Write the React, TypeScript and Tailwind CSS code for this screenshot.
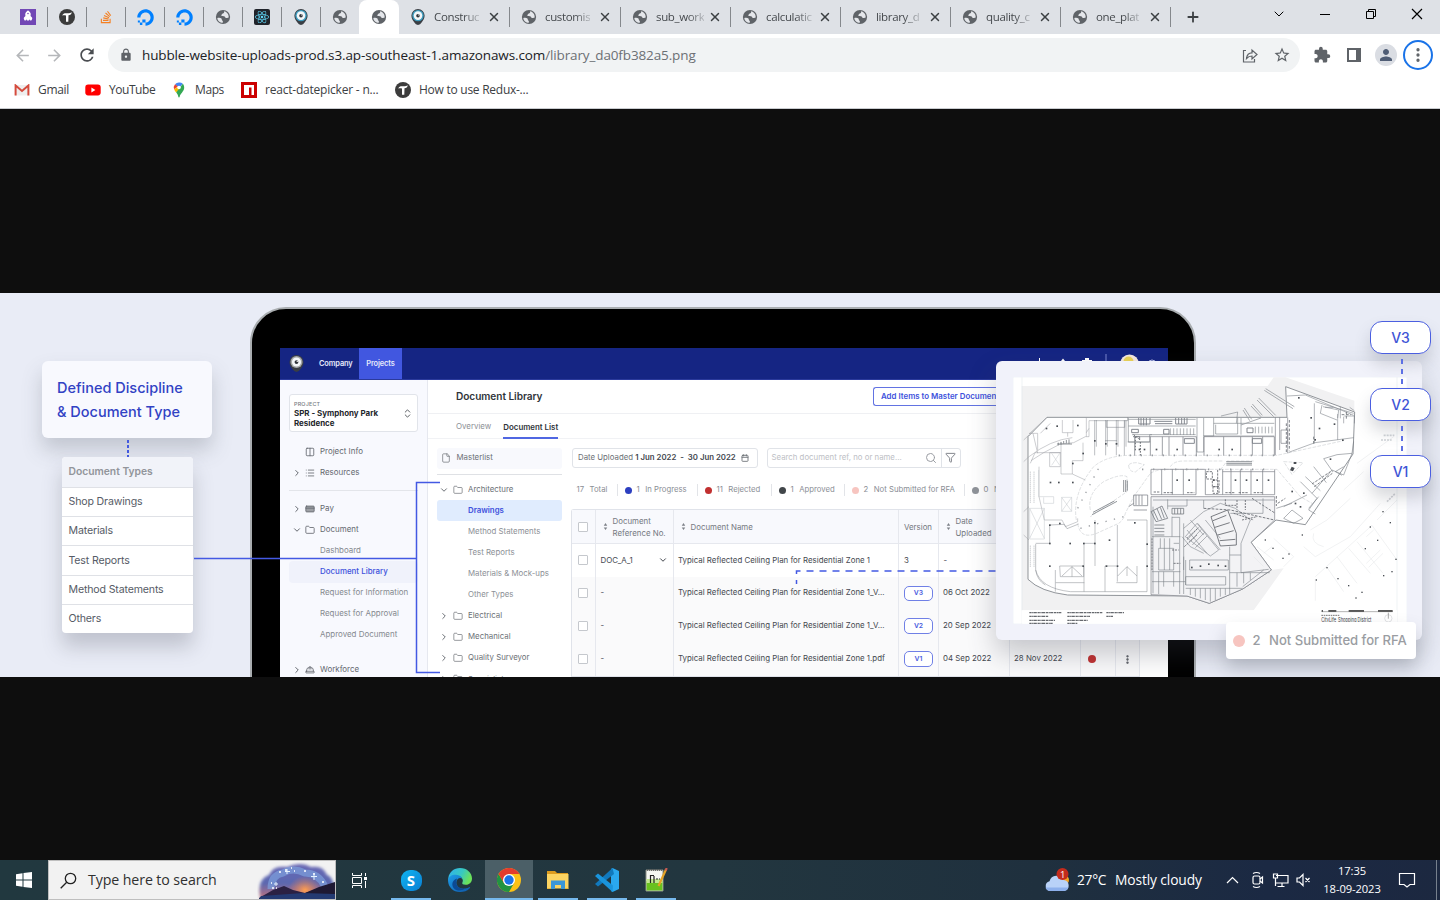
import React from "react";
import { FaRocket, FaStackOverflow, FaDigitalOcean, FaReact } from "react-icons/fa";
import { MdLock, MdExtension, MdPerson, MdStarBorder, MdRefresh, MdArrowBack, MdArrowForward } from "react-icons/md";
import { ChevronRight, ChevronDown, Folder, File, Search, Filter, ChevronsUpDown, List, Columns2, Calendar, CreditCard, HardHat, MoreVertical, X, Plus } from "lucide-react";

/* ---------- Small brand and favicon drawings ---------- */

function Globe() {
  return (
    <svg viewBox="0 0 16 16" className="size-4">
      <circle cx="8" cy="8" r="7.1" fill="#5f6368" />
      <path d="M2.300 8.900c1.600-.3 3.300-.3 4.100.5.700.7.1 1.500.9 2.100.7.500.8 1.300.4 2.200C4.900 13.700 2.500 11.700 2.300 8.900zM9 2.300c.5 1.200-.2 2-1.200 2.200-.8.2-.6 1-1.300 1.300-.5.3-.2 1 .5 1.100 1.100.2 2.700.1 3.200 1.300.3.800 1 1.100 1.900.8l1.600-.5C13.900 5.600 12 2.900 9 2.300z" fill="#e4e6ea" />
    </svg>
  );
}

function HubblePin({ className = "size-4", ring = "#3f9dc0" }: { className?: string; ring?: string }) {
  return (
    <svg viewBox="0 0 14 16" className={className}>
      <path d="M7 0a6.600 6.600 0 0 1 6.600 6.600c0 2.600-1 4.400-2.800 6.600Q9.200 15.800 7 16 4.800 15.800 3.200 13.200C1.400 11 .4 9.200.4 6.600A6.600 6.600 0 0 1 7 0z" fill="#3a3e44" />
      <circle cx="7" cy="6.600" r="5.700" fill={ring} />
      <circle cx="7" cy="6.600" r="4.300" fill="#f3f6f8" />
      <circle cx="7" cy="6.700" r="1.800" fill="#30343a" />
      <circle cx="7.700" cy="6" r=".6" fill="#fff" />
    </svg>
  );
}

function TLogo() {
  return (
    <svg viewBox="0 0 16 16" className="size-4">
      <circle cx="8" cy="8" r="8" fill="#3c3c3c" />
      <path d="M3.200 6.600C4 4.500 5.500 4 8 4.200c2 .1 3.400-.1 4.800-.9-.3 1.900-1.500 2.900-3.300 2.900L9.300 12.800H7V6.500C5.400 6.200 4.300 6.100 3.200 6.600z" fill="#fff" />
    </svg>
  );
}

function Gmail() {
  return (
    <svg viewBox="0 0 16 12" className="h-3 w-4">
      <path d="M1 1h14v10.500H1z" fill="#eee" />
      <path d="M1.600 11.500V1.500L8 7l6.400-5.500v10" fill="none" stroke="#d54b3d" strokeWidth="2" />
    </svg>
  );
}

function YouTube() {
  return (
    <svg viewBox="0 0 16 12" className="h-3 w-4">
      <rect x=".3" y=".6" width="15.400" height="10.800" rx="2.800" fill="#f00" />
      <path d="M6.400 3.600v4.800l4-2.400z" fill="#fff" />
    </svg>
  );
}

function MapsPin() {
  return (
    <svg viewBox="0 0 12 16" className="h-4 w-3">
      <path d="M6 .5A5.200 5.200 0 0 0 2 2.300L6 6l3.800-4.300A5.200 5.200 0 0 0 6 .5z" fill="#4285f4" />
      <path d="M2 2.300a5.200 5.200 0 0 0-.9 5L5 4.500z" fill="#ea4335" />
      <path d="M1.100 7.300c.4 1.200 1.200 2.100 2.100 3.200L7.500 6 5 4.500z" fill="#fbbc04" />
      <path d="M9.800 1.700 3.200 10.500C4.400 12 5 13 5.300 14.700c.1.900 1.300.9 1.400 0C7.200 11.400 11.200 9.400 11.200 5.700c0-1.600-.5-3-1.400-4z" fill="#34a853" />
      <circle cx="6" cy="5.500" r="1.800" fill="#fff" />
    </svg>
  );
}

function Npm() {
  return (
    <svg viewBox="0 0 16 16" className="size-4">
      <path d="M0 0h16v16H0z" fill="#c00" />
      <path d="M3 3h10v10h-2.500V5.600H8V13H3z" fill="#fff" />
    </svg>
  );
}

/* ---------- Browser frame ---------- */

const pinned: React.ReactNode[] = [
  <span className="flex size-4 items-center justify-center bg-[#7248b5]"><FaRocket className="size-2.5 -rotate-45 text-white" /></span>,
  <TLogo />,
  <FaStackOverflow className="size-3.5 text-[#f48024]" />,
  <FaDigitalOcean className="size-[17px] text-[#0080ff]" />,
  <FaDigitalOcean className="size-[17px] text-[#0080ff]" />,
  <Globe />,
  <span className="flex size-4 items-center justify-center rounded-[2px] bg-[#20232a]"><FaReact className="size-3.5 text-[#61dafb]" /></span>,
  <HubblePin />,
];

const openTabs = [
  { name: "Construc", width: "w-[111px]" },
  { name: "customis", width: "w-[111px]" },
  { name: "sub_work", width: "w-[110px]" },
  { name: "calculatic", width: "w-[110px]" },
  { name: "library_d", width: "w-[110px]" },
  { name: "quality_c", width: "w-[110px]" },
  { name: "one_plat", width: "w-[110px]" },
];

function TabStrip() {
  return (
    <div className="flex h-[34px] bg-[#dee1e6]">
      <div className="flex w-[359px] items-center rounded-br-lg pl-[9px]">
        {pinned.map((icon, i) => (
          <div key={i} className="flex h-5 w-[39px] items-center justify-center border-r border-[#85888c]">{icon}</div>
        ))}
        <div className="flex w-[38px] items-center justify-center"><Globe /></div>
      </div>
      <div className="flex w-10 items-center justify-center rounded-t-lg bg-white"><Globe /></div>
      {openTabs.map((tab, i) => (
        <div key={tab.name} className={`flex items-center ${tab.width}`}>
          <div className="flex h-5 w-full items-center border-r border-[#85888c] pl-[11px] pr-[8px]">
            {i === 0 ? <HubblePin className="size-4 shrink-0" /> : <span className="shrink-0"><Globe /></span>}
            <span className="ml-2 whitespace-nowrap text-[11.500px] tracking-[-0.35px] text-[#45494d] [mask-image:linear-gradient(to_right,#000_65%,rgba(0,0,0,0.25))]">{tab.name}</span>
            <X className="ml-auto size-3.5 shrink-0 text-[#3c4043]" strokeWidth={2.500} />
          </div>
        </div>
      ))}
      <div className="flex w-[43px] items-center justify-center"><Plus className="size-4 text-[#3c4043]" strokeWidth={2.700} /></div>
      <div className="ml-auto flex h-7 w-[184px] items-center text-black">
        <span className="flex w-[46px] justify-center"><ChevronDown className="size-4" strokeWidth={1.500} /></span>
        <span className="flex w-[46px] justify-center"><i className="h-px w-2.5 bg-black" /></span>
        <svg viewBox="0 0 46 28" className="h-7 w-[46px]" fill="none" stroke="currentColor">
          <path d="M18.500 11.500h7v7h-7zM20.500 11.500v-2h7v7h-2" />
        </svg>
        <svg viewBox="0 0 46 28" className="h-7 w-[46px]" fill="none" stroke="currentColor" strokeWidth="1.200">
          <path d="m18 9 10 10M28 9 18 19" />
        </svg>
      </div>
    </div>
  );
}

function Toolbar() {
  return (
    <div className="flex h-[42px] items-center bg-white text-[#5f6368]">
      <div className="flex w-[108px] items-center gap-[13px] pl-[13px]">
        <MdArrowBack className="size-[19px] text-[#b5b7ba]" />
        <MdArrowForward className="size-[19px] text-[#b5b7ba]" />
        <MdRefresh className="size-5 text-[#4a4d51]" />
      </div>
      <div className="flex h-[34px] w-[1192px] items-center rounded-full bg-[#f1f3f4] pl-[11px]">
        <MdLock className="size-3.5" />
        <span className="ml-[9px] whitespace-nowrap text-[13.500px] tracking-[-0.125px] text-[#202124]">
          hubble-website-uploads-prod.s3.ap-southeast-1.amazonaws.com<span className="text-[#6c7074]">/library_da0fb382a5.png</span>
        </span>
        <div className="ml-auto flex items-center gap-[14px] pr-[9px]">
          <svg viewBox="0 0 18 18" className="size-[18px]" fill="none" stroke="currentColor" strokeWidth="1.200">
            <path d="M5 4.500H2.500v11.500h11v-3M5.500 12.500c.4-3.500 2.300-5.500 5.500-5.600V4l5 4.500-5 4.500v-3c-2.300 0-4 .8-5.500 2.500z" />
          </svg>
          <MdStarBorder className="size-[18px]" />
        </div>
      </div>
      <div className="ml-[13px] flex items-center">
        <MdExtension className="size-[18px]" />
        <span className="ml-4 size-3.5 border-2 border-r-[5px] border-[#5f6368]" />
        <span className="ml-[14px] flex size-[22px] items-center justify-center rounded-full bg-[#dadde3]"><MdPerson className="size-[18px] text-[#4f5d75]" /></span>
        <span className="ml-1.5 flex size-[30px] items-center justify-center rounded-full border-2 border-[#1a73e8]">
          <MoreVertical className="size-[18px]" strokeWidth={2.400} />
        </span>
      </div>
    </div>
  );
}

function Bookmarks() {
  return (
    <div className="flex h-[33px] items-center border-b border-[#c9ccd0] bg-white pb-[4px] pl-3.5 text-[12px] text-[#3c4043]">
      <Gmail /><span className="ml-2 w-[47px] tracking-[-0.3px]">Gmail</span>
      <YouTube /><span className="ml-2 w-[64px] tracking-[-0.45px]">YouTube</span>
      <MapsPin /><span className="ml-[10px] w-[46px] tracking-[-0.4px]">Maps</span>
      <Npm /><span className="ml-2 w-[130px] whitespace-nowrap tracking-[-0.21px]">react-datepicker - n...</span>
      <TLogo /><span className="ml-2 whitespace-nowrap tracking-[-0.26px]">How to use Redux-...</span>
    </div>
  );
}

/* ---------- Document types card ---------- */

function DocumentTypes() {
  return (
    <div className="absolute left-[42px] top-[68px] flex w-[170px] flex-col items-center">
      <div className="h-[77px] w-full rounded-md bg-[#f8f9fe] pl-[15px] pt-[15px] text-[14.500px] leading-6 font-medium text-[#3142c4] shadow-[0_12px_20px_rgba(80,86,100,0.25)]">
        <p>Defined Discipline</p>
        <p>&amp; Document Type</p>
      </div>
      <div className="ml-[2px] h-[19px] w-[2px] bg-[repeating-linear-gradient(to_bottom,transparent_0_2px,#4359df_2px_5px)]" />
      <div className="w-[131px] overflow-hidden rounded bg-white text-[10.600px] text-[#565b66] shadow-[0_14px_20px_rgba(80,86,100,0.27)]">
        <p className="flex h-[30px] items-center bg-[#f1f3f9] pl-[7px] text-[10.300px] font-semibold text-[#92959b]">Document Types</p>
        {["Shop Drawings", "Materials", "Test Reports", "Method Statements", "Others"].map((t) => (
          <p key={t} className="flex h-[29.200px] items-center border-t border-[#dfe1e6] pl-[7px] tracking-[-0.16px]">{t}</p>
        ))}
      </div>
    </div>
  );
}

/* ---------- Tablet application ---------- */

function AppHeader() {
  return (
    <div className="flex h-8 border-b border-[#2b3a9c] bg-[#152583] text-[7.400px] font-semibold text-[#e6e9fb]">
      <div className="flex w-[79px] items-center pl-[9px]">
        <HubblePin className="h-[17px] w-[15px]" ring="#a3a6a8" />
        <span className="ml-[15px] tracking-[-0.1px]">Company</span>
      </div>
      <div className="flex w-[43px] items-center justify-center bg-[#4157e0] tracking-[-0.1px]">Projects</div>
      <svg viewBox="0 0 140 32" className="ml-auto h-8 w-[140px]">
        <path d="M11.500 10v12M5.500 16h12" stroke="#fff" />
        <path d="M35 10.500l4 5h-8z" fill="#fff" />
        <path d="M57 10h4v2h3v8H54v-8h3z" fill="#fff" />
        <path d="M78 6v20" stroke="#7a86cf" />
        <circle cx="101.500" cy="16" r="9.500" fill="#f5e9e2" />
        <circle cx="100.500" cy="13.500" r="5" fill="#ecd457" />
        <circle cx="124" cy="16" r="4" fill="none" stroke="#b9c0ea" />
      </svg>
    </div>
  );
}

type NavProps = { label: string; icon?: React.ReactNode; arrow?: "right" | "down"; kind?: "child" | "active" };

function NavRow({ label, icon, arrow, kind }: NavProps) {
  const tone = kind === "active" ? "bg-[#f0f2fb] text-[#3d51dc] font-medium" : kind === "child" ? "text-[#85898f]" : "text-[#64686f]";
  return (
    <div className={`mx-[9px] flex h-[21.100px] shrink-0 items-center rounded-sm ${tone}`}>
      <span className="flex w-[15px] justify-center">{arrow === "right" ? <ChevronRight className="size-[10px]" strokeWidth={2.400} /> : arrow === "down" ? <ChevronDown className="size-[10px]" strokeWidth={2.400} /> : null}</span>
      <span className="flex w-4 pl-[1px] [&>svg]:size-[10px]">{icon}</span>
      <span className="whitespace-nowrap">{label}</span>
    </div>
  );
}

function Sidebar() {
  return (
    <div className="flex w-[148px] shrink-0 flex-col border-r border-[#e6e8ef] bg-[#f8f9fe] pt-3.5 text-[7.950px]">
      <div className="mx-[9px] mb-[9px] flex h-[38px] items-center justify-between rounded-[3px] border border-[#e1e4ea] bg-white pl-1 pr-[4px]">
        <div className="pt-[2px] leading-[10px] font-bold text-[#23262b]">
          <p className="text-[5.400px] leading-[7px] font-medium tracking-[0.2px] text-[#777b82]">PROJECT</p>
          <p>SPR - Symphony Park</p>
          <p>Residence</p>
        </div>
        <ChevronsUpDown className="size-[11px] text-[#4f5359]" />
      </div>
      <NavRow label="Project Info" icon={<Columns2 />} />
      <NavRow label="Resources" arrow="right" icon={<List />} />
      <div className="mx-[9px] mt-[7px] mb-[7px] h-px shrink-0 bg-[#e3e5ea]" />
      <NavRow label="Pay" arrow="right" icon={<CreditCard fill="#9da0a5" />} />
      <NavRow label="Document" arrow="down" icon={<Folder />} />
      <NavRow label="Dashboard" kind="child" />
      <NavRow label="Document Library" kind="active" />
      <NavRow label="Request for Information" kind="child" />
      <NavRow label="Request for Approval" kind="child" />
      <NavRow label="Approved Document" kind="child" />
      <div className="h-[14px] shrink-0" />
      <NavRow label="Workforce" arrow="right" icon={<HardHat />} />
    </div>
  );
}

function TreeRow({ label, open, leaf, active }: { label: string; open?: boolean; leaf?: boolean; active?: boolean }) {
  return (
    <div className={`flex h-[21.100px] shrink-0 items-center rounded-[3px] ${active ? "bg-[#e0ecfe] font-semibold text-[#3d51dc]" : leaf ? "text-[#8c9096]" : "text-[#6c7076]"}`}>
      <span className="w-4 pl-[2px]">{leaf ? null : open ? <ChevronDown className="size-[10px]" strokeWidth={2.400} /> : <ChevronRight className="size-[10px]" strokeWidth={2.400} />}</span>
      <span className="w-[15px]">{leaf ? null : <Folder className="size-[10px]" strokeWidth={1.700} />}</span>
      <span className="whitespace-nowrap">{label}</span>
    </div>
  );
}

function Tree() {
  return (
    <div className="flex w-[125px] shrink-0 flex-col text-[7.850px]">
      <div className="flex h-[21px] shrink-0 items-center rounded-[3px] bg-[#f8f9fd] pl-1 text-[#6c7076]">
        <File className="size-[10px]" strokeWidth={1.700} /><span className="ml-[5.500px]">Masterlist</span>
      </div>
      <div className="mt-[5px] mb-[4.500px] h-px shrink-0 bg-[#dfe1e5]" />
      <TreeRow label="Architecture" open />
      <TreeRow label="Drawings" leaf active />
      <TreeRow label="Method Statements" leaf />
      <TreeRow label="Test Reports" leaf />
      <TreeRow label="Materials & Mock-ups" leaf />
      <TreeRow label="Other Types" leaf />
      <TreeRow label="Electrical" />
      <TreeRow label="Mechanical" />
      <TreeRow label="Quality Surveyor" />
      <TreeRow label="Specialist" />
    </div>
  );
}

function Status({ dot, count, label, width }: { dot?: string; count: string; label: string; width: string }) {
  return (
    <div className={`flex h-3 shrink-0 items-center whitespace-nowrap border-r border-[#e2e4e8] ${width}`}>
      {dot ? <i className={`mr-[5px] size-[7px] shrink-0 rounded-full ${dot}`} /> : null}
      <span>{count}</span><span className="ml-[5.500px]">{label}</span>
    </div>
  );
}

function SortMark() {
  return (
    <svg viewBox="0 0 5 8" className="h-[7px] w-[5px] shrink-0 fill-[#7d8188]"><path d="M2.500 0 4.500 3h-4zM2.500 8 .5 5h4z" /></svg>
  );
}

function Box() {
  return <i className="size-[10px] rounded-[1px] border border-[#c5c8cd] bg-white" />;
}

const grid = "grid grid-cols-[24px_78px_225.500px_39.500px_71px_71px_35px_24px] [&>div]:flex [&>div]:items-center [&>div]:border-r [&>div]:border-[#e6e8ee]";

const files = [
  { name: "Typical Reflected Ceiling Plan for Residential Zone 1_V...", v: "V3", date: "06 Oct 2022" },
  { name: "Typical Reflected Ceiling Plan for Residential Zone 1_V...", v: "V2", date: "20 Sep 2022" },
  { name: "Typical Reflected Ceiling Plan for Residential Zone 1.pdf", v: "V1", date: "04 Sep 2022" },
];

function DocTable() {
  return (
    <div className="-ml-px w-[569px] shrink-0 rounded-tl-[3px] border-l border-t border-[#e0e3ea] text-[7.880px] text-[#44484f]">
      <div className={`${grid} h-[34px] border-b border-[#e6e8ee] bg-[#f8f9fd] leading-[12px] text-[#74787f]`}>
        <div className="justify-center"><Box /></div>
        <div className="gap-[5px] pl-[7px]"><SortMark /><span>Document<br />Reference No.</span></div>
        <div className="gap-[5px] pl-[7px]"><SortMark />Document Name</div>
        <div className="pl-[5px]">Version</div>
        <div className="gap-[5px] pl-[7px]"><SortMark /><span>Date<br />Uploaded</span></div>
        <div /><div /><div />
      </div>
      <div className={`${grid} h-[32.900px]`}>
        <div className="justify-center"><Box /></div>
        <div className="justify-between pl-[5px] pr-[5px]"><span>DOC_A_1</span><ChevronDown className="size-[10px]" strokeWidth={2.400} /></div>
        <div className="pl-[4.500px] whitespace-nowrap">Typical Reflected Ceiling Plan for Residential Zone 1</div>
        <div className="pl-[5px]">3</div>
        <div className="pl-[5px]">-</div>
        <div /><div /><div />
      </div>
      {files.map((f) => (
        <div key={f.v} className={`${grid} h-[32.900px] bg-[#fafafb]`}>
          <div className="justify-center"><Box /></div>
          <div className="pl-[5px]">-</div>
          <div className="pl-[4.500px] whitespace-nowrap">{f.name}</div>
          <div className="pl-[5px]"><span className="flex h-[15.500px] w-[29px] items-center justify-center rounded-[5px] border border-[#7080e6] bg-white text-[6.800px] font-semibold text-[#4a5ce0]">{f.v}</span></div>
          <div className="pl-[4.500px] whitespace-nowrap">{f.date}</div>
          <div className="pl-[4.500px] whitespace-nowrap">28 Nov 2022</div>
          <div className="pl-[7px]"><i className="size-2 rounded-full bg-[#c13030]" /></div>
          <div className="justify-center"><MoreVertical className="size-[11px]" strokeWidth={3} /></div>
        </div>
      ))}
      <div className="h-4 border-t border-[#e0e3ea]" />
    </div>
  );
}

function Main() {
  return (
    <div className="flex w-[740px] shrink-0 flex-col bg-white">
      <div className="flex h-[34px] shrink-0 items-center justify-between border-b border-[#eff0f3] pl-[28px]">
        <h1 className="pt-px text-[10.100px] font-semibold tracking-[-0.05px] text-[#30343a]">Document Library</h1>
        <div className="flex h-[19px] w-[295px] items-center rounded-l-[3px] border border-r-0 border-[#6273e2] pl-[7px] text-[7.900px] font-semibold text-[#3d51dc]">Add Items to Master Document List</div>
      </div>
      <div className="flex h-[25px] shrink-0 gap-3 border-b border-[#f1f2f5] pl-[28px] text-[7.900px] text-[#8c9096]">
        <span className="flex items-center pt-[2px]">Overview</span>
        <span className="-mb-px flex items-center border-b-2 border-[#5067e2] pt-[4px] font-semibold text-[#30343a]">Document List</span>
      </div>
      <div className="flex pt-[8.500px] pl-[9px]">
        <Tree />
        <div className="ml-[9.500px] flex w-[590px] flex-col">
          <div className="flex h-5 shrink-0 gap-[9px] text-[7.820px]">
            <div className="flex w-[186px] items-center rounded-[3px] border border-[#e0e3e8] pl-[5.500px] text-[#6c7076]">
              <span className="whitespace-nowrap">Date Uploaded <b className="font-semibold text-[#44484f]">1 Jun 2022 &nbsp;- &nbsp;30 Jun 2022</b></span>
              <Calendar className="ml-[5px] size-2" strokeWidth={2.600} />
            </div>
            <div className="flex w-[194px] items-center rounded-[3px] border border-[#e0e3e8] text-[#bdc0c5]">
              <span className="pl-1 whitespace-nowrap">Search document ref, no or name...</span>
              <Search className="ml-auto mr-1 size-[12px] text-[#9a9da3]" />
              <span className="flex h-full w-[19px] items-center justify-center border-l border-[#e0e3e8]"><Filter className="size-[11px] text-[#777b82]" /></span>
            </div>
          </div>
          <div className="mt-[16px] mb-[12.500px] flex h-[13px] shrink-0 items-center gap-[7px] pl-[5px] text-[7.750px] text-[#8a8e95]">
            <Status count="17" label="Total" width="w-[41px]" />
            <Status dot="bg-[#2c3fc0]" count="1" label="In Progress" width="w-[73px]" />
            <Status dot="bg-[#c13030]" count="11" label="Rejected" width="w-[67px]" />
            <Status dot="bg-[#41464a]" count="1" label="Approved" width="w-[66px]" />
            <Status dot="bg-[#f7c5c0]" count="2" label="Not Submitted for RFA" width="w-[113px]" />
            <Status dot="bg-[#8f9399]" count="0" label="Not Required" width="w-[90px]" />
          </div>
          <DocTable />
        </div>
      </div>
    </div>
  );
}

function Tablet() {
  return (
    <div className="mt-[14px] ml-[250px] h-[420px] w-[946px] shrink-0 overflow-hidden rounded-t-[36px] border-2 border-[#a9adb0] bg-black pt-[39px] pl-[28px]">
      <div className="w-[888px] overflow-hidden">
        <AppHeader />
        <div className="flex h-[350px]">
          <Sidebar />
          <Main />
        </div>
      </div>
    </div>
  );
}

/* ---------- Floor plan ---------- */

const stalls = [313, 346, 378, 402];
const northShops = [433, 480, 516, 536, 578, 618, 641, 700, 751, 786, 817, 852];
const midShops = [482, 514, 546, 579, 617, 645, 697, 722, 750, 782, 817, 853];
const columns: [number, number][] = [
  [168, 415], [200, 408], [262, 406], [278, 490], [247, 520], [180, 577], [205, 577], [247, 577], [313, 452], [346, 461], [378, 461],
  [447, 478], [462, 478], [498, 478], [560, 478], [686, 478], [725, 478], [925, 323], [962, 383], [1032, 402], [987, 415], [974, 449],
  [1057, 450], [1020, 507], [178, 705], [208, 700], [313, 698], [357, 750], [178, 760], [239, 760], [280, 760], [313, 760], [278, 828],
  [178, 828], [348, 828], [381, 828], [470, 828], [470, 762], [433, 698], [604, 832], [630, 828], [655, 822], [683, 826], [705, 828],
  [560, 570], [596, 570], [670, 570], [735, 570], [768, 570], [800, 570], [834, 570], [905, 604], [940, 609], [915, 640], [930, 650],
];
const faintColumns: [number, number][] = [
  [825, 750], [848, 775], [878, 805], [896, 792], [936, 735], [1140, 711], [1162, 751], [1200, 698], [1010, 833], [1043, 866], [978, 870],
  [1075, 887], [1115, 907], [1097, 924], [1180, 857], [1205, 845], [1217, 808], [1125, 776], [1178, 665],
];

function FloorPlan() {
  return (
    <svg viewBox="68 261 1182 741" className="h-[247px] w-[394px]" fill="none" stroke="#7b7f86" strokeWidth="1.500">
      <path d="M68 261h1182v741H68z" fill="#fff" stroke="#e3e9f0" />
      <path d="M94 288H832L850 262H885L1092 332V400L857 690 782 757 843 840 880 835 790 961H94z" fill="#f1f1f2" stroke="none" />
      <path d="M95 262v740M1220 262v740" stroke="#dfe6ea" />
      <path d="M170 382H890L886 290 1093 366 1088 492 945 704 857 690 782 757 843 840 757 897 657 940 590 918 232 915 Q150 905 113 868V440z" fill="#fff" stroke="#7b7f86" strokeWidth="2.500" />
      <path d="M482 620H853V690L782 757 843 840 757 897 657 940 590 918 482 914z" fill="#f3f3f5" strokeWidth="2" />
      {/* western hall */}
      <path d="M116 500Q180 450 246 443M122 512 160 488 210 462 250 458 285 440 296 440V392H313M146 530V620L162 690H215L225 710 262 695V685M120 520 134 488H212V455M178 488h32v42h-32zM212 488V552H246L285 570M246 552V512H278V458M128 430 142 490M116 430H142V480M170 382 116 432M180 400 150 430M100 450 116 435M100 515 116 500M100 665 116 650M100 735 116 750M216 390v38h32v-38M232 428v12M288 382V440M296 415 288 428" stroke="#9a9da3" />
      <path d="M200 462h45M204 458v8M212 456v8M220 453v8M228 450v10M236 448v14" strokeWidth="2.500" />
      <path d="M136 762V840Q150 895 240 905H470M136 760H178V705L222 703 230 716 265 702M136 840Q140 870 165 885M195 840V905M281 760V905M281 760H314V690M314 760V828M381 705V875M470 690V905M410 690H470M344 905V828H378M196 878H282M378 878H440V828M208 828H280V860H210zM215 858 245 830 275 858M245 830V860M382 858 410 830 440 858M410 830V858" stroke="#85898f" />
      <path d="M118 655 162 745M162 655 118 745M118 655H162V747H118zM184 490 208 526M208 490 184 526M214 622h30v42h-30zM214 622 244 664M244 622 214 664M145 540V620H190V640H160V622" stroke="#c3c6ca" />
      <path d="M120 545v95M131 545v95M120 767v65M131 767v65" stroke="#b9bcc0" strokeDasharray="3 3" strokeWidth="3" />
      {/* circulation */}
      <path d="M258 690Q245 610 310 530 350 496 420 496H860L1060 452M262 700Q270 755 330 725L385 700Q400 690 405 670L430 620 480 550Q500 538 530 538H860L930 620 965 640M300 660Q290 610 340 575 390 550 410 560V605L330 660 300 680M415 525Q420 518 440 518L462 524 435 546Q415 545 415 525zM880 515 938 518 905 553zM540 530Q550 513 580 513H700M690 540 710 513H790" stroke="#bfc2c7" strokeDasharray="11 4" />
      <path d="M708 515H785M708 520H785M708 525H785M305 674 380 634M308 667 372 633M400 570v36M406 570v36M411 572v30" strokeWidth="2.500" />
      {stalls.map((x) => <path key={x} d={`M${x} 390V496M${x + 5} 390V470`} />)}
      <path d="M313 392H412V382M344 452h36M348 392v20h55v-20" />
      {/* northern service band */}
      <path d="M414 388H616M414 408H616M414 384v72H478V434H616M425 434h60M640 384v54h30v-54M670 400h182M640 438H852M752 384v50M676 404v28H742V384M620 384V486H640V440M692 378 742 366 738 400M412 456H480M540 415v20M550 415v20M560 415v20M570 415v20M580 415v20M590 415v20M600 415v20M610 415v20M795 410v20M805 410v20M815 410v20M825 410v20M835 410v20M845 410v20" strokeWidth="1.800" />
      <path d="M445 384v18h34v-18M452 384v22M460 384v22M468 384v22M556 384v18h34v-18M565 384v18M574 384v18M582 384v18M492 394H546M494 401H546M424 418h20v10h-20zM520 418h16v14h-16zM770 414h18v14h-18zM428 440h20v10M582 446h30v14h-30zM786 446h28v14h-28z" strokeWidth="2.800" />
      <path d="M435 440v44M450 456v40M430 434 450 450" stroke="#62666c" strokeWidth="3" strokeDasharray="5 4" />
      {northShops.map((x) => <path key={x} d={`M${x} 440V497`} strokeWidth="2.200" />)}
      {midShops.map((x) => <path key={x} d={`M${x} 538V614`} strokeWidth="2.200" />)}
      <path d="M433 440H618M640 440H852M482 614H617M645 614H853M482 538H645M697 545H853M855 382V495M868 382V480M892 382V490M872 420H892V460H872z" strokeWidth="2" />
      <path d="M490 606h18M520 608h28M590 608h22M705 608h30M745 608h30M790 608h30M648 545h18v22h-18zM666 570h20v20h-20zM668 590h18v20h-18zM682 540v70" stroke="#666a70" strokeWidth="2.600" strokeDasharray="7 3" />
      {/* diagonal passages in the north-east */}
      <path d="M826 296 912 350M822 301 908 356M805 324 856 376M800 330 850 380M786 342 816 376M782 348 812 380M762 354 784 388M758 360 778 392M752 405 812 384" stroke="#999ca1" strokeWidth="2.500" />
      <path d="M890 318 945 315 1090 376M972 340V460M995 345 990 370 1040 390M1042 372V450M975 335 1090 370M998 350 1045 360 1042 384M1004 352h25M1050 350V385M1062 378h30v22M895 487 974 458 1090 443M1060 380V400M1078 352 1092 362" strokeWidth="1.700" />
      <path d="M1068 365v22M1054 374h28M970 440v24M888 400v88M897 390v92" stroke="#6b6f75" strokeWidth="2.600" strokeDasharray="8 5" />
      {/* eastern wedge */}
      <path d="M1090 455 1085 490 1060 555 1025 540 965 610M1085 490 1040 494 1000 506 1028 546M970 530 1008 578M945 560 990 602M930 575 980 625 955 660 975 672M955 655 985 620M880 650 950 615M858 655 905 640M880 685 905 660 938 685 910 700zM1060 530 1035 545 1055 556" strokeWidth="1.800" />
      <path d="M965 582 1020 545M972 590 1026 550M858 618v30M862 640 885 625M640 655 720 660 852 690M785 625 852 668" stroke="#666a70" strokeWidth="2.600" strokeDasharray="8 4" />
      {/* southern court */}
      <path d="M488 630H852M532 628v30M590 628v20H532M640 630V655M818 625v45H720M488 650V910M505 775H550V840H505zM485 740H570M545 682H568V912M510 745V775M522 745V840M538 745V840M550 760H566M485 845H570M545 680V740M580 700V840M485 875H585M505 845V912M520 845V890M550 845V890M580 800V912M598 810H714V840H598zM586 860H706V885H586zM586 810V885M718 770V912M752 760V848L835 838M718 795H752M718 848H838M740 848V890M760 848V880M780 848V870M586 895H757M600 895V915M615 895V920M630 895V925M645 895V930M660 895V935M675 895V930M690 895V920M705 895V915M820 840 757 890" strokeWidth="1.800" />
      <path d="M482 665 515 648 532 685 497 695zM490 662 503 690M500 656 514 688M510 652 522 685M492 705H522M492 715H522M492 725H522M492 735H522M545 655H580V672H545zM553 655v17M562 655v17M571 655v17" strokeWidth="2.500" />
      <path d="M662 680 712 660 738 730 738 765 690 768zM668 692 708 676M674 712 718 698M682 735 730 722M688 752 735 748" stroke="#5a5e64" strokeWidth="2.400" />
      <path d="M580 715 640 665 690 640 735 655 780 690 752 760M585 740 620 700 685 780 660 798zM590 750 625 712M597 757 633 718M606 765 642 728M615 773 650 738M590 720 650 790M622 700 690 780M645 690 690 745M600 690 640 735M575 740 600 770 640 790" strokeWidth="1.700" />
      <path d="M590 745 622 715M582 770 620 735M755 690 800 680M730 670 790 690M740 630v28M765 630v30M705 628v18H740M485 745v95M545 780h20M550 820h20" stroke="#666a70" strokeWidth="2.600" strokeDasharray="6 3" />
      <path d="M430 615h42v32h-42zM437 615v30M446 615v30M455 615v30M430 660H470M415 650 430 640" strokeWidth="2.200" />
      {/* neighbouring blocks */}
      <path d="M975 860 1145 706 1220 810M1160 690 1220 630M1100 755 1178 850M1040 800 1100 880M1010 832 1060 905M975 868V932M1075 775 1140 850M1128 820 1170 780M1135 832 1178 790M1128 740 1150 720M940 770 975 800 1080 740 1170 640M960 720 1010 690 1080 625M1000 770Q960 760 970 730M800 770 850 810M850 745 910 800 880 830M820 790 845 770M790 800 820 830M1060 600 1120 545M1100 520 1210 440" stroke="#e2e4e7" />
      <path d="M1172 450h32M1180 436h32M1190 635 1215 610" stroke="#d0d3d7" strokeWidth="5" strokeDasharray="6 3" />
      <path d="M385 496H860M455 538H850" stroke="#999da2" strokeWidth="5" strokeDasharray="4 29" />
      <path d="M262 655 330 525M270 715 400 680" stroke="#9da0a5" strokeWidth="4" strokeDasharray="4 22" />
      <g fill="#4a4e54" stroke="none">
        {columns.map(([x, y]) => <rect key={`${x}-${y}`} x={x - 2} y={y - 2} width="5" height="5" />)}
        {faintColumns.map(([x, y]) => <rect key={`${x}-${y}`} x={x - 2} y={y - 2} width="4" height="4" />)}
        <path d="M904 530l9 4-5 10-9-3zM910 516h8v6h-8z" />
      </g>
      {/* legend, scale bar and title */}
      <path d="M94 961H1220V1001H94z" fill="#fff" stroke="none" />
      <path d="M117 968h98M231 968h106M348 968h53M117 979h58M231 979h68M348 979h20M117 991h77M231 991h61M117 1000h70M231 1000h30" stroke="#66696e" strokeWidth="4" strokeDasharray="7 1.500 4 1 9 2" />
      <path d="M994 963h4M1014 963h24M1075 963h46M1163 963h44" stroke="#222" strokeWidth="4" />
      <path d="M994 965H1207" stroke="#666" />
      <circle cx="1194" cy="985" r="11" stroke="#c5c7ca" />
      <path d="M1194 968v18" stroke="#555" />
      <path d="M993 976h56" stroke="#777" strokeDasharray="5 2" strokeWidth="3" />
      <text x="993" y="995" fontSize="17" textLength="150" lengthAdjust="spacingAndGlyphs" fill="#33363b" stroke="none">CityLife_Shopping District</text>
    </svg>
  );
}

function PlanCard() {
  return (
    <div className="absolute left-[996px] top-[68px] h-[279px] w-[426px] rounded-md bg-[#f1f2fa] pt-[16px] pl-[17px] shadow-[0_14px_28px_rgba(60,66,80,0.28)]">
      <FloorPlan />
    </div>
  );
}

function VersionChain() {
  return (
    <div className="absolute left-[1370px] top-[28px] flex w-[61px] flex-col items-center">
      {["V3", "V2", "V1"].map((v, i) => (
        <React.Fragment key={v}>
          {i > 0 ? <i className="ml-[3px] h-[34.500px] w-[1.500px] bg-[repeating-linear-gradient(to_bottom,transparent_0_5px,#5d70e4_5px_10px)]" /> : null}
          <span className="flex h-[32.500px] w-full items-center justify-center rounded-[12px] border-[1.500px] border-[#4b5fe0] bg-white text-[14px] font-medium text-[#4055d6] shadow-[0_10px_16px_rgba(80,86,100,0.22)]">{v}</span>
        </React.Fragment>
      ))}
    </div>
  );
}

function Banner() {
  return (
    <div className="relative flex h-[384px] shrink-0 overflow-hidden bg-[#e9ecf6] font-['Inter',sans-serif]">
      <Tablet />
      <DocumentTypes />
      <svg viewBox="0 0 1440 384" className="absolute inset-0 h-[384px] w-[1440px]" fill="none" stroke="#4359e3" strokeWidth="1.500">
        <path d="M194 265.500H416.500M440 189.500H416.500V379.500H440" />
        <path d="M796.500 291V278H996" strokeDasharray="7 6" strokeDashoffset="3" />
      </svg>
      <PlanCard />
      <VersionChain />
      <div className="absolute left-[1226px] top-[329px] flex h-[37px] w-[190px] items-center rounded-[4px] bg-white pl-[7px] text-[13.100px] font-medium text-[#9a9da2] shadow-[0_10px_18px_rgba(80,86,100,0.28)]">
        <i className="size-3 rounded-full bg-[#f7c5c0]" />
        <span className="ml-[7.500px]">2</span>
        <span className="ml-[8.500px] whitespace-nowrap tracking-[-0.02px]">Not Submitted for RFA</span>
      </div>
    </div>
  );
}

/* ---------- Windows taskbar ---------- */

function NightSky() {
  return (
    <svg viewBox="0 0 78 38" className="h-[38px] w-[78px]">
      <defs>
        <linearGradient id="sky" x1="0" y1="0" x2="0" y2="1"><stop offset="0" stopColor="#6a68b4" /><stop offset=".55" stopColor="#5a68b0" /><stop offset="1" stopColor="#c4707a" /></linearGradient>
        <radialGradient id="sun" cx=".5" cy=".5" r=".5"><stop offset="0" stopColor="#ffa050" /><stop offset="1" stopColor="#e0765a" stopOpacity="0" /></radialGradient>
        <filter id="soft" x="-10%" y="-10%" width="120%" height="120%"><feGaussianBlur stdDeviation="1.400" /></filter>
      </defs>
      <path d="M3 36Q0 18 12 14 16 4 30 6 44 0 54 6 66 4 70 14 78 16 78 38H4z" fill="url(#sky)" filter="url(#soft)" />
      <path d="M14 28Q14 14 26 12 36 6 48 12 62 12 68 26" fill="none" stroke="#7fa4e0" strokeWidth="7" opacity=".65" />
      <ellipse cx="48" cy="29" rx="17" ry="14" fill="url(#sun)" />
      <path d="M2 37 16 29 27 25 36 29 48 32 78 22V38H2z" fill="#2b2143" />
      <path d="M48 32 62 26 78 21V33L50 34z" fill="#1f1933" />
      <path d="M4 35 46 32 78 33V38H2z" fill="#243a72" />
      <path d="M14 22h1M19 27h1M22 11h2M28 9h2M37 10h1M47 10h2M56 13h2M65 21h2M15 27h2M34 7h1" stroke="#fff" strokeWidth="1.500" />
      <path d="M57 12v7M54 15.500h6M30 8v5M28 10.500h5M19 21v4M17 23h4" stroke="#e6f3ff" />
    </svg>
  );
}

function Edge() {
  return (
    <svg viewBox="0 0 24 24" className="size-6">
      <defs>
        <linearGradient id="edgeA" x1="0" y1="0" x2="1" y2=".4"><stop offset="0" stopColor="#2fb0f0" /><stop offset=".6" stopColor="#38c9c0" /><stop offset="1" stopColor="#6be25a" /></linearGradient>
        <linearGradient id="edgeB" x1="0" y1="0" x2="1" y2="1"><stop offset="0" stopColor="#1d9de8" /><stop offset="1" stopColor="#0f58a8" /></linearGradient>
      </defs>
      <path d="M.3 10C1.200 4 6 0 12 0c7 0 12 5 12 10.500 0 4-3 6.300-6.400 6.300-2.700 0-3.700-1-3.300-2 1.700-3-.6-6.500-5-6.500C4.300 8.300.8 10.500.3 14z" fill="url(#edgeA)" />
      <path d="M.1 12C.6 8.500 4 6.500 8 6.800c3.500.2 5.600 2 6.300 4-2-1.800-6-.4-6 4 0 3.700 4 6.700 9 5.800 1.600-.3 3-.8 4-1.400.6-.3 1 .2.6.8C19.500 23 15.600 24 12 24 5 24-.3 18.600.1 12z" fill="url(#edgeB)" />
      <path d="M8.300 14.800c0 3.700 4 6.700 9 5.800C14 23 9 23.500 6 20.500 3 17.500 4 12 9 10.600c-.5 1.200-.7 2.700-.7 4.200z" fill="#0c4a94" />
    </svg>
  );
}

function Chrome() {
  return (
    <svg viewBox="0 0 24 24" className="size-6">
      <circle cx="12" cy="12" r="12" fill="#fbc116" />
      <path d="M1.600 6A12 12 0 0 0 12 24l4.800-8.500L7 15z" fill="#229342" />
      <path d="M1.600 6A12 12 0 0 1 22.400 6H12L7 15z" fill="#e33b2e" />
      <circle cx="12" cy="12" r="6" fill="#fff" /><circle cx="12" cy="12" r="4.700" fill="#1a73e8" />
    </svg>
  );
}

function Explorer() {
  return (
    <svg viewBox="0 0 24 24" className="size-6">
      <path d="M1 3h8l2 2h11v5H1z" fill="#dd9c1f" />
      <path d="M1 6h21.500v14.500H1z" fill="#fcd462" />
      <path d="M5 21V12.500h14V21h-4v-4H9v4z" fill="#3b97d8" /><path d="M1 20h4v1H1zM19 20h3.500v1H19z" fill="#e7b43d" />
    </svg>
  );
}

function VsCode() {
  return (
    <svg viewBox="0 0 24 24" className="size-6">
      <path d="M17.500 0 24 3v18l-6.500 3-1.500-1V1z" fill="#2aa8ef" />
      <path d="M17.500 0 19 6 3 18.500 0 16z" fill="#1179bd" />
      <path d="M17.500 24 18 17.500 3 5.500 0 8z" fill="#1a94dc" />
    </svg>
  );
}

function NotePad() {
  return (
    <svg viewBox="0 0 24 24" className="size-6">
      <path d="M2 2h17v21H2z" fill="#f5f7f2" stroke="#8b8f86" />
      <path d="M2.500 13h16v9.500h-16z" fill="#69c11f" /><path d="M2.500 11h16v4h-16z" fill="#c2e88e" />
      <path d="M3 2h15" stroke="#555" strokeWidth="1.500" strokeDasharray="1 1" />
      <path d="M6.500 7v8M10 8v7M7 7.500h3M12 11h2M15 11h1" stroke="#222" strokeWidth="1.200" />
      <path d="m22 1.500-7.500 16.500" stroke="#e4a327" strokeWidth="2.200" /><path d="m22.700 0-1 2.500" stroke="#c75a52" strokeWidth="2.200" />
    </svg>
  );
}

function Skype() {
  return (
    <span className="flex size-[21px] items-center justify-center rounded-[9px] bg-[linear-gradient(135deg,#10b4f0,#0a7fd4)] text-[15px] font-bold text-white">S</span>
  );
}

const running = [
  { icon: <Skype />, cell: "w-12", line: "w-10" },
  { icon: <Edge />, cell: "w-[50px]", line: "w-0" },
  { icon: <Chrome />, cell: "w-12 bg-[#4b5f67]", line: "w-12" },
  { icon: <Explorer />, cell: "w-[50px]", line: "w-10" },
  { icon: <VsCode />, cell: "w-[48px]", line: "w-10" },
  { icon: <NotePad />, cell: "w-[49px]", line: "w-10" },
];

function Taskbar() {
  return (
    <div className="flex h-10 shrink-0 bg-[linear-gradient(to_right,#21383f_0%,#22363f_50%,#1f303e_72%,#1b2943_88%,#1c2840_100%)] text-white">
      <div className="flex w-12 items-center justify-center">
        <svg viewBox="0 0 16 16" className="size-4 fill-white"><path d="M0 2.200 6.500 1.300V7.500H0zM7.500 1.100 16 0v7.500H7.500zM0 8.500h6.500v6.200L0 13.800zM7.500 8.500H16V16l-8.500-1.100z" /></svg>
      </div>
      <div className="flex w-72 items-center border border-[#bfbfbf] bg-[#f2f2f2] pl-[11px] text-[14.200px] text-[#303030]">
        <svg viewBox="0 0 17 17" className="size-[17px]" fill="none" stroke="#222" strokeWidth="1.300"><circle cx="10.500" cy="6.500" r="5.200" /><path d="M6.700 10.200.7 16.200" /></svg>
        <span className="ml-[11px] whitespace-nowrap tracking-[-0.1px]">Type here to search</span>
        <span className="ml-auto"><NightSky /></span>
      </div>
      <div className="flex w-[51px] items-center justify-center pr-[4px]">
        <svg viewBox="0 0 17 17" className="size-[17px]" fill="none" stroke="#fff"><path d="M1.500 1v2.500h9V1M1.500 5.500h9v6h-9zM1.500 16v-2.500h9V16M14.500 1v3M14.500 9v7" /><path d="M13 5h3v3h-3z" fill="#fff" stroke="none" /></svg>
      </div>
      {running.map((r, i) => (
        <div key={i} className={`flex shrink-0 flex-col items-center ${r.cell}`}>
          <div className="flex h-[38px] items-center pt-[2px]">{r.icon}</div>
          <i className={`h-0.5 bg-[#76b9ed] ${r.line}`} />
        </div>
      ))}
      <div className="ml-auto flex items-center">
        <svg viewBox="0 0 28 26" className="h-[26px] w-7">
          <circle cx="20" cy="13" r="5" fill="#f5a524" />
          <path d="M6 24a5 5 0 0 1-.5-9.800A7.500 7.500 0 0 1 19.500 13 5.600 5.600 0 0 1 20.500 24z" fill="#b9d2f8" />
          <path d="M6 24a5 5 0 0 1-4.500-3.500h23A5 5 0 0 1 20.500 24z" fill="#8db0ec" />
          <circle cx="18.500" cy="7" r="6" fill="#c42b1c" />
          <text x="16" y="10.500" fontSize="9.500" fill="#fff">1</text>
        </svg>
        <span className="ml-[5px] w-[38px] whitespace-nowrap text-[13.800px] tracking-[-0.3px]">27°C</span>
        <span className="w-[111px] whitespace-nowrap text-[13.800px] tracking-[-0.12px]">Mostly cloudy</span>
        <svg viewBox="0 0 84 18" className="h-[18px] w-[84px]" fill="none" stroke="#fff" strokeWidth="1.200">
          <path d="M1 12 6.500 6.500 12 12" />
          <rect x="27" y="5" width="7" height="8" rx="1.500" /><path d="M34 8l2.500-2v6L34 10M27 2.500q3.500-2 7 0M27 15.500q3.500 2 7 0" />
          <path d="M50 4.500h12v7.500H50M56 12v3M51.500 15.500h7" /><path d="M47.500 3h4v4h-4zM49.500 7v8" />
          <path d="M71 7v4h2.500L77 14.500V3.500L73.500 7zM79.500 7l4 4M83.500 7l-4 4" />
        </svg>
        <div className="ml-[10px] w-[64px] text-center text-[11.200px] leading-[18px] whitespace-nowrap tracking-[-0.1px]"><p>17:35</p><p>18-09-2023</p></div>
        <svg viewBox="0 0 18 18" className="ml-[14px] size-[18px]" fill="none" stroke="#fff" strokeWidth="1.200"><path d="M1.500 2.500h15v11H12L9 16l-3-2.500H1.500z" /></svg>
        <i className="ml-[20px] mr-[3px] h-10 w-px bg-[#76808d]" />
      </div>
    </div>
  );
}

export default function App() {
  return (
    <div className="flex h-[900px] w-[1440px] flex-col overflow-hidden bg-[#0e0e0e] font-['Open_Sans','Noto_Sans',sans-serif]">
      <TabStrip />
      <Toolbar />
      <Bookmarks />
      <main className="flex h-[751px] shrink-0 flex-col pt-[184px]">
        <Banner />
      </main>
      <Taskbar />
    </div>
  );
}
